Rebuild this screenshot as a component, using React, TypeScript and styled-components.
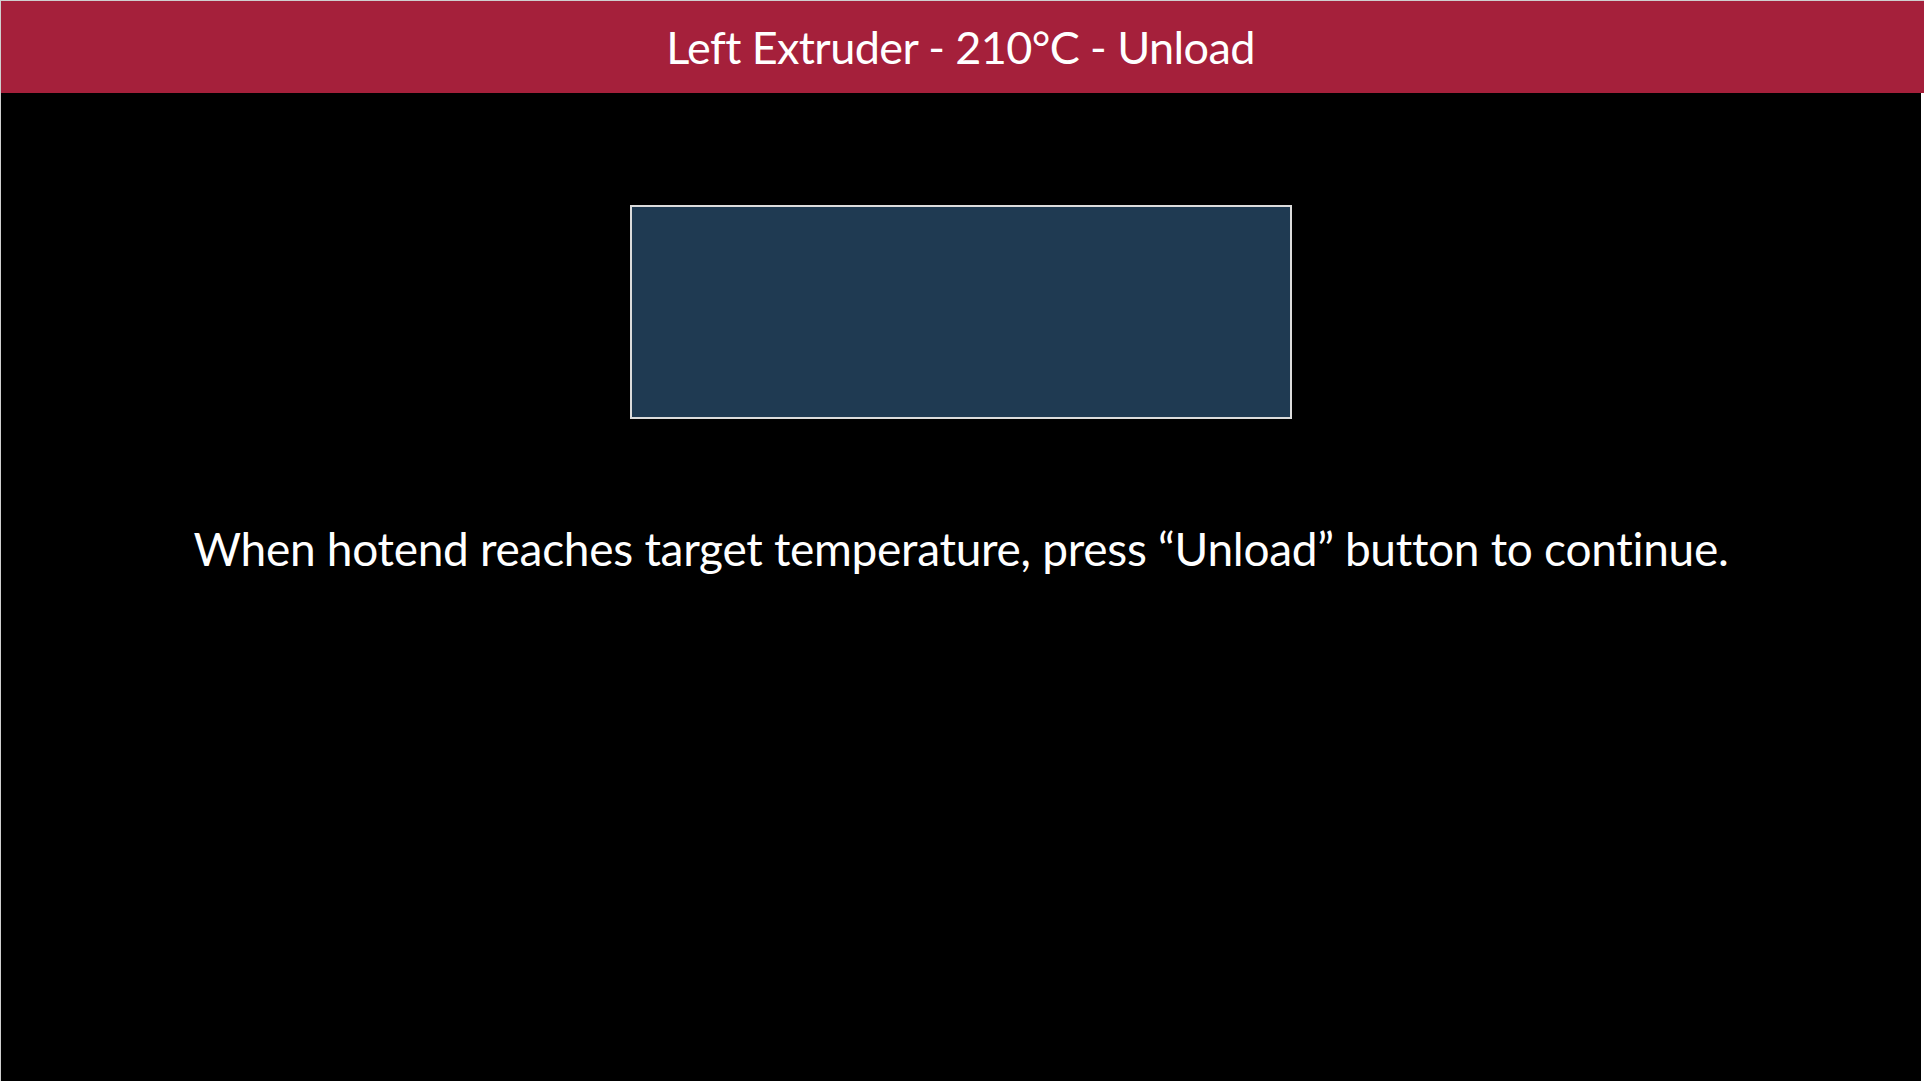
import React from "react";
import styled, { createGlobalStyle } from "styled-components";

const Global = createGlobalStyle`
  html, body {
    margin: 0;
    padding: 0;
    background: #ffffff;
    overflow: hidden;
  }
`;

const Screen = styled.div`
  width: 1924px;
  height: 1081px;
  box-sizing: border-box;
  border-top: 1px solid #cfcfcf;
  border-left: 1px solid #cfcfcf;
  display: flex;
  flex-direction: column;
  font-family: "Lato", "Open Sans", sans-serif;
  color: #ffffff;
`;

const Header = styled.header`
  height: 92px;
  flex: none;
  background: #a5203b;
  display: flex;
  align-items: center;
  justify-content: center;
`;

const Title = styled.h1`
  margin: 0;
  font-weight: 400;
  font-size: 45px;
  line-height: 1;
  letter-spacing: -0.6px;
  transform: translateX(-2px);
`;

const Main = styled.main`
  flex: 1;
  margin-right: 3px;
  background: #000000;
  display: flex;
  flex-direction: column;
  align-items: center;
  padding-top: 112px;
`;

const Gauge = styled.div`
  width: 662px;
  height: 214px;
  box-sizing: border-box;
  border: 2px solid #dcdcdc;
  background: #1f3a52;
`;

const Message = styled.p`
  margin: 107px 0 0;
  font-size: 46px;
  font-weight: 400;
  line-height: 1;
  letter-spacing: -0.28px;
`;

export default function App() {
  return (
    <>
      <Global />
      <Screen>
        <Header>
          <Title>Left Extruder - 210°C - Unload</Title>
        </Header>
        <Main>
          <Gauge />
          <Message>
            When hotend reaches target temperature, press “Unload” button to continue.
          </Message>
        </Main>
      </Screen>
    </>
  );
}
